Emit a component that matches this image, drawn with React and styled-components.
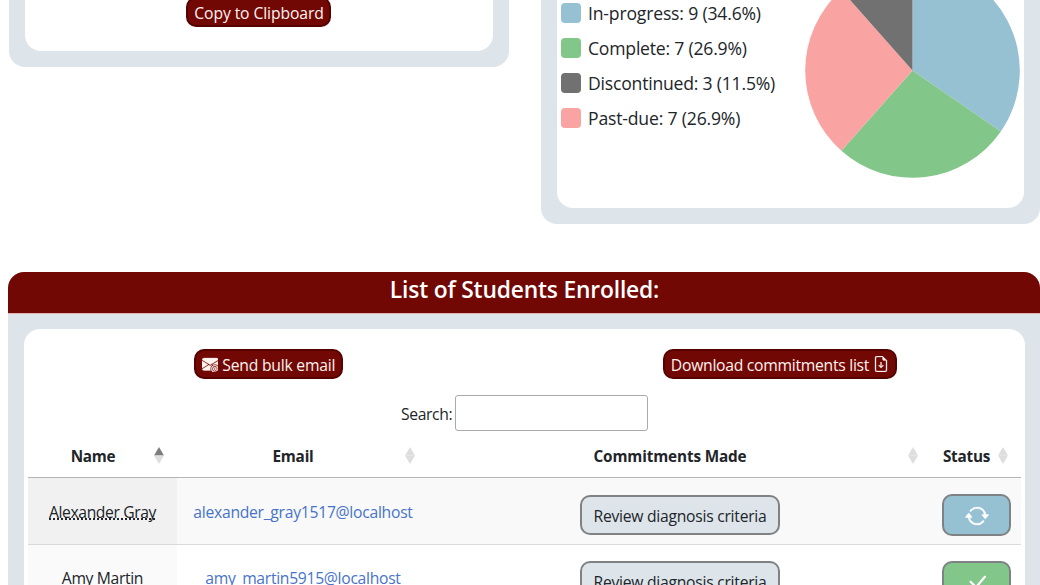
import React from "react";
import styled, { createGlobalStyle } from "styled-components";
import {
  BsEnvelopeAtFill,
  BsFileEarmarkArrowDown,
  BsArrowRepeat,
  BsCheckLg,
} from "react-icons/bs";

const GlobalStyle = createGlobalStyle`
  * { box-sizing: border-box; }
  body {
    margin: 0;
    background: #fff;
    color: #212529;
    font-family: "Open Sans", "Noto Sans", sans-serif;
    font-size: 15.7px;
    line-height: 24px;
    overflow: hidden;
  }
`;

const Page = styled.main`
  height: 585px;
  overflow: hidden;
  padding-left: 8px;
`;

const TopRow = styled.div`
  display: flex;
  justify-content: space-between;
  align-items: flex-start;
  height: 272px;
  padding-left: 1px;
`;

const Card = styled.section`
  width: ${(p) => p.$width}px;
  height: ${(p) => p.$height}px;
  padding: 0 16px 16px;
  border-radius: 0 0 16px 16px;
  background: #dde4ea;
`;

const CardBody = styled.div`
  display: flex;
  justify-content: ${(p) => p.$justify || "flex-start"};
  align-items: flex-start;
  height: 100%;
  border-radius: 0 0 16px 16px;
  background: #fff;
`;

const MaroonButton = styled.button`
  display: flex;
  align-items: center;
  justify-content: center;
  flex: none;
  gap: ${(p) => p.$gap || 0}px;
  width: ${(p) => p.$width}px;
  height: 30px;
  margin: ${(p) => p.$margin || 0};
  padding: 0 0 0 ${(p) => p.$inset || 0}px;
  border: 2px solid #560202;
  border-radius: 10px;
  background: #720804;
  color: #fff3f0;
  font: inherit;
  letter-spacing: ${(p) => p.$spacing || 0}px;
  white-space: nowrap;

  svg {
    stroke: currentColor;
    stroke-width: 0.3px;
  }
`;

const ButtonText = styled.span`
  padding-top: 2px;
`;

const Legend = styled.ul`
  display: flex;
  flex-direction: column;
  gap: 15px;
  width: 248px;
  margin: 0;
  padding: 3px 0 0 4px;
  list-style: none;
`;

const LegendItem = styled.li`
  display: flex;
  align-items: center;
  gap: 7px;
  height: 20px;
  font-size: 17.6px;
  line-height: 25px;
  letter-spacing: ${(p) => p.$spacing}px;
  white-space: nowrap;
`;

const Swatch = styled.span`
  width: 20px;
  height: 20px;
  border-radius: 4px;
  background: ${(p) => p.$color};
`;

const PanelTitle = styled.h2`
  height: 41px;
  margin: 0;
  padding-left: 1px;
  border-radius: 16px 16px 0 0;
  background: #720804;
  color: #fff;
  text-align: center;
  font-size: 22.8px;
  font-weight: 600;
  line-height: 36px;
  letter-spacing: ${(p) => p.$spacing}px;
`;

const Panel = styled.section`
  padding: 15px 15px 0 16px;
  border-top: 1px solid #e3b3b5;
  background: #dde4ea;
`;

const PanelBody = styled.div`
  height: 300px;
  padding: 20px 4px 0;
  border-radius: 16px 16px 0 0;
  background: #fff;
`;

const Actions = styled.div`
  display: flex;
  justify-content: space-between;
  padding: 0 124px 0 166px;
`;

const SearchRow = styled.label`
  display: flex;
  align-items: center;
  gap: 3px;
  margin-top: 16px;
  padding-left: 373px;
  height: 36px;
`;

const SearchLabel = styled.span`
  width: 51px;
  padding-top: 2px;
  letter-spacing: ${(p) => p.$spacing}px;
`;

const SearchInput = styled.input`
  width: 193px;
  height: 36px;
  border: 1px solid #aaa;
  border-radius: 3px;
  background: #fff;
`;

const Table = styled.div`
  margin-top: 4px;
`;

const Row = styled.div`
  display: grid;
  grid-template-columns: 149px 251px 503px 90px;
`;

const HeadRow = styled(Row)`
  height: 43px;
  border-bottom: 1px solid #b5b5b5;
`;

const HeadCell = styled.div`
  position: relative;
  display: flex;
  align-items: center;
  justify-content: center;
  padding: 0 28px 1px 9px;
  font-size: 15.3px;
  font-weight: 700;
  letter-spacing: ${(p) => p.$spacing}px;
  white-space: nowrap;
`;

const SortMark = styled.svg`
  position: absolute;
  right: 13px;
  top: 12px;
  width: 10px;
  height: 17px;
`;

const BodyRow = styled(Row)`
  height: 66.5px;
  border-bottom: 1px solid #dadada;
  background: ${(p) => (p.$odd ? "#f9f9f9" : "#fff")};
`;

const Cell = styled.div`
  display: flex;
  align-items: center;
  justify-content: center;
  padding-top: ${(p) => p.$drop || 0}px;
  background: ${(p) => p.$background || "transparent"};
`;

const StudentName = styled.span`
  text-decoration: underline dotted 1.5px;
  text-underline-offset: 1px;
  text-decoration-skip-ink: none;
  letter-spacing: ${(p) => p.$spacing}px;
`;

const EmailLink = styled.a`
  padding-left: 1px;
  color: #4773c9;
  letter-spacing: ${(p) => p.$spacing}px;
`;

const ReviewButton = styled.button`
  width: 200px;
  height: 40px;
  padding: 2px 0 0 1px;
  border: 2px solid #7f8284;
  border-radius: 10px;
  background: #dde4ea;
  color: #212529;
  font: inherit;
  letter-spacing: ${(p) => p.$spacing}px;
`;

const StatusButton = styled.button`
  display: flex;
  align-items: center;
  justify-content: center;
  width: 69px;
  height: 42px;
  padding: 1px 0 0 1px;
  border: 2px solid #7f8284;
  border-radius: 10px;
  background: ${(p) => p.$color};
  color: #fff;

  svg {
    stroke: currentColor;
    stroke-width: ${(p) => p.$stroke}px;
  }
`;

const COLORS = {
  progress: "#96c1d3",
  complete: "#83c68a",
  discontinued: "#717171",
  pastDue: "#faa3a3",
};

const LEGEND = [
  { label: "In-progress: 9 (34.6%)", color: COLORS.progress, spacing: -0.18 },
  { label: "Complete: 7 (26.9%)", color: COLORS.complete, spacing: -0.21 },
  { label: "Discontinued: 3 (11.5%)", color: COLORS.discontinued, spacing: -0.21 },
  { label: "Past-due: 7 (26.9%)", color: COLORS.pastDue, spacing: -0.18 },
];

const SLICES = [
  { value: 9, color: COLORS.progress },
  { value: 7, color: COLORS.complete },
  { value: 7, color: COLORS.pastDue },
  { value: 3, color: COLORS.discontinued },
];

const HEADINGS = [
  { label: "Name", spacing: -0.25, sorted: true },
  { label: "Email", spacing: -0.2 },
  { label: "Commitments Made", spacing: -0.14 },
  { label: "Status", spacing: -0.25 },
];

const STUDENTS = [
  {
    name: "Alexander Gray",
    nameSpacing: -0.4,
    email: "alexander_gray1517@localhost",
    emailSpacing: -0.27,
    color: COLORS.progress,
    Icon: BsArrowRepeat,
    stroke: 0.35,
    drop: 9,
  },
  {
    name: "Amy Martin",
    nameSpacing: -0.35,
    email: "amy_martin5915@localhost",
    emailSpacing: -0.3,
    color: COLORS.complete,
    Icon: BsCheckLg,
    stroke: 0,
    drop: 7,
  },
];

function Pie() {
  const cx = 107.5;
  const cy = 70.5;
  const r = 107.3;
  const total = SLICES.reduce((sum, s) => sum + s.value, 0);
  const point = (n) => {
    const a = (n / total) * Math.PI * 2;
    return `${cx + r * Math.sin(a)} ${cy - r * Math.cos(a)}`;
  };
  let start = 0;
  return (
    <svg width="215" height="178" viewBox="0 0 215 178">
      {SLICES.map(({ value, color }) => {
        const from = point(start);
        start += value;
        return (
          <path key={color} fill={color} d={`M${cx} ${cy}L${from}A${r} ${r} 0 0 1 ${point(start)}Z`} />
        );
      })}
    </svg>
  );
}

function Sort({ active }) {
  return (
    <SortMark viewBox="0 0 10 17">
      <path d="M5 0L10 8.5H0Z" fill={active ? "#7d7d7d" : "#dedede"} />
      <path d="M5 17L10 8.5H0Z" fill="#dedede" />
    </SortMark>
  );
}

export default function App() {
  return (
    <Page>
      <GlobalStyle />
      <TopRow>
        <Card $width={500} $height={67}>
          <CardBody $justify="center">
            <MaroonButton $width={145} $margin="-3px 1px 0 0" $inset={1} $spacing={-0.1}>
              <ButtonText>Copy to Clipboard</ButtonText>
            </MaroonButton>
          </CardBody>
        </Card>
        <Card $width={499} $height={224}>
          <CardBody>
            <Legend>
              {LEGEND.map((item) => (
                <LegendItem key={item.label} $spacing={item.spacing}>
                  <Swatch $color={item.color} />
                  <span>{item.label}</span>
                </LegendItem>
              ))}
            </Legend>
            <Pie />
          </CardBody>
        </Card>
      </TopRow>
      <PanelTitle $spacing={-0.18}>List of Students Enrolled:</PanelTitle>
      <Panel>
        <PanelBody>
          <Actions>
            <MaroonButton $width={149} $gap={4} $spacing={-0.22}>
              <BsEnvelopeAtFill size={16.5} />
              <ButtonText>Send bulk email</ButtonText>
            </MaroonButton>
            <MaroonButton $width={234} $gap={4} $spacing={-0.27}>
              <ButtonText>Download commitments list</ButtonText>
              <BsFileEarmarkArrowDown size={16} />
            </MaroonButton>
          </Actions>
          <SearchRow>
            <SearchLabel $spacing={-0.38}>Search:</SearchLabel>
            <SearchInput />
          </SearchRow>
          <Table>
            <HeadRow>
              {HEADINGS.map((h) => (
                <HeadCell key={h.label} $spacing={h.spacing}>
                  {h.label}
                  <Sort active={h.sorted} />
                </HeadCell>
              ))}
            </HeadRow>
            {STUDENTS.map((s, i) => (
              <BodyRow key={s.name} $odd={i % 2 === 0}>
                <Cell $drop={2} $background={i % 2 === 0 ? "#f1f1f1" : "#fafafa"}>
                  <StudentName $spacing={s.nameSpacing}>{s.name}</StudentName>
                </Cell>
                <Cell $drop={2}>
                  <EmailLink $spacing={s.emailSpacing}>{s.email}</EmailLink>
                </Cell>
                <Cell $drop={s.drop}>
                  <ReviewButton $spacing={-0.26}>Review diagnosis criteria</ReviewButton>
                </Cell>
                <Cell $drop={9}>
                  <StatusButton $color={s.color} $stroke={s.stroke}>
                    <s.Icon size={24} />
                  </StatusButton>
                </Cell>
              </BodyRow>
            ))}
          </Table>
        </PanelBody>
      </Panel>
    </Page>
  );
}
